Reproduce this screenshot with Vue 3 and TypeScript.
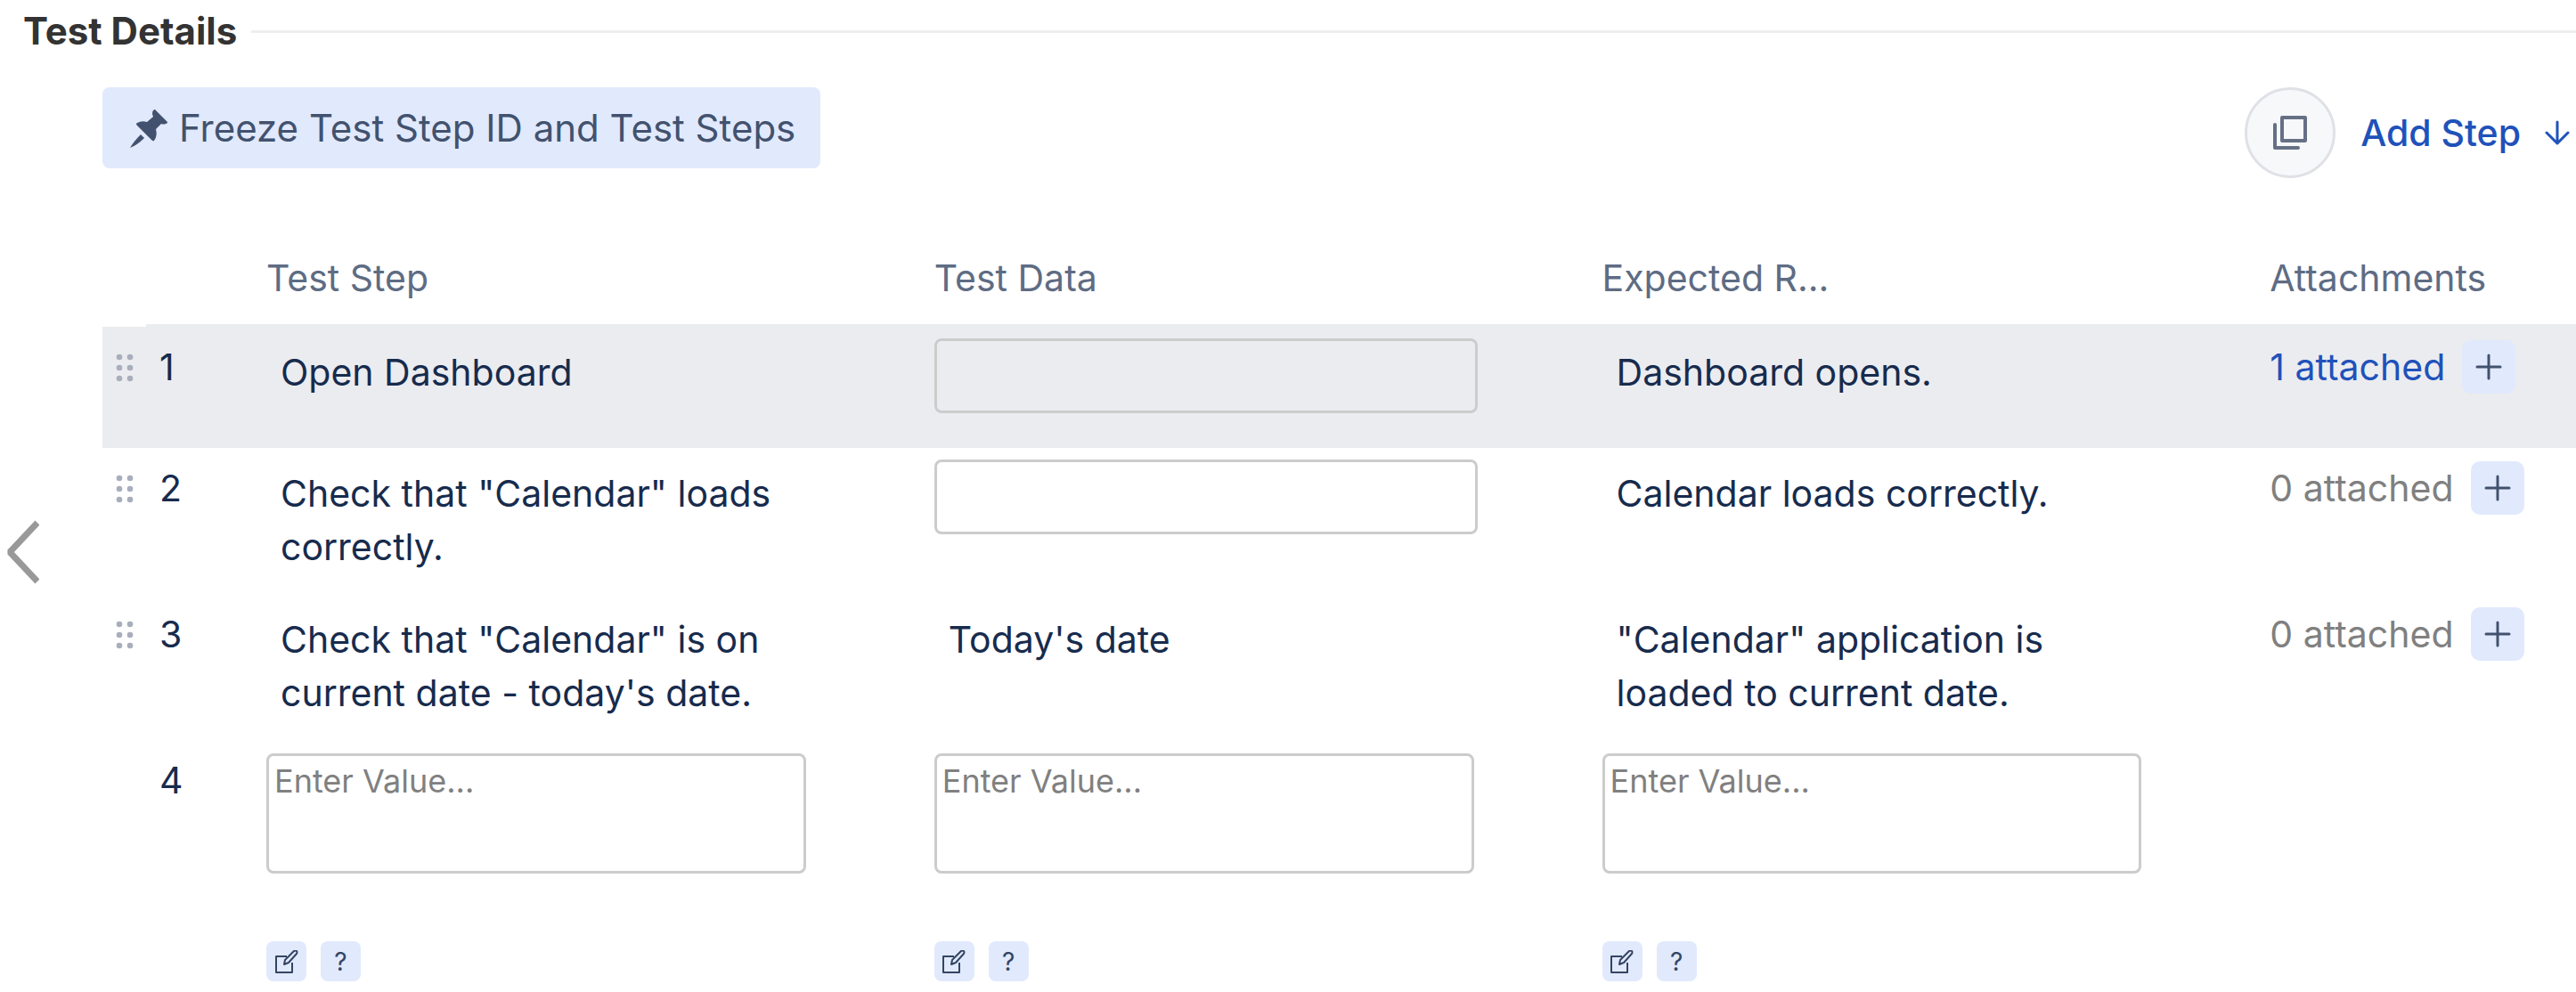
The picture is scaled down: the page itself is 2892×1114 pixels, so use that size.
<script setup lang="ts">
import { ref } from 'vue'

interface Step {
  id: number
  step: string
  data: string
  expected: string
  attached: number
}

const steps = ref<Step[]>([
  { id: 1, step: 'Open Dashboard', data: '', expected: 'Dashboard opens.', attached: 1 },
  { id: 2, step: 'Check that "Calendar" loads correctly.', data: '', expected: 'Calendar loads correctly.', attached: 0 },
  {
    id: 3,
    step: 'Check that "Calendar" is on current date - today\'s date.',
    data: "Today's date",
    expected: '"Calendar" application is loaded to current date.',
    attached: 0,
  },
])

const draftFields = ['Test Step', 'Test Data', 'Expected Result']
const drafts = ref<string[]>(['', '', ''])
const activeId = ref(1)
</script>

<template>
  <section class="details">
    <header class="title-bar">
      <h2>Test Details</h2>
    </header>

    <div class="body">
      <aside class="gutter">
        <button type="button" class="prev" aria-label="Previous">
          <svg width="44" height="72" viewBox="0 0 44 72" fill="none" stroke="#999" stroke-width="7" stroke-linejoin="bevel">
            <path d="M42 3 11 36l31 33" />
          </svg>
        </button>
      </aside>

      <div class="content">
        <div class="toolbar">
          <button type="button" class="freeze">
            <svg width="44" height="44" viewBox="0 0 44 44" fill="#42526e">
              <path d="M27 2q2-2 3 0l13 13q0 2-2 2-3 1-5 0l-6 6q2 8-2 13-1 1-3-1L9 19q-2-2 0-3 5-3 11-1l7-6q-2-4 0-7z" />
              <path d="M13 29l4 4Q9 41 1 44 5 37 13 29z" />
            </svg>
            <span>Freeze Test Step ID and Test Steps</span>
          </button>
          <div class="actions">
            <button type="button" class="copy" aria-label="Copy steps">
              <svg width="38" height="38" viewBox="0 0 38 38" fill="none" stroke="#667085" stroke-width="4">
                <path d="M10 2h26v26H10z" stroke-linejoin="round" />
                <path d="M2 10v26h26" stroke-linecap="round" stroke-linejoin="round" />
              </svg>
            </button>
            <a href="#" class="add-step">
              Add Step
              <svg width="28" height="28" viewBox="0 0 28 28" fill="none" stroke="currentColor" stroke-width="3" stroke-linecap="round" stroke-linejoin="round">
                <path d="M14 2v24M2 14l12 12 12-12" />
              </svg>
            </a>
          </div>
        </div>

        <table>
          <colgroup>
            <col class="c-grip" />
            <col class="c-num" />
            <col class="c-text" />
            <col class="c-text" />
            <col class="c-text" />
            <col />
          </colgroup>
          <thead>
            <tr>
              <td></td>
              <td></td>
              <th scope="col">Test Step</th>
              <th scope="col">Test Data</th>
              <th scope="col">Expected R...</th>
              <th scope="col">Attachments</th>
            </tr>
          </thead>
          <tbody>
            <tr v-for="s in steps" :key="s.id" :class="{ active: s.id === activeId }">
              <td class="grip">
                <svg width="20" height="32" viewBox="0 0 20 32" fill="#a9aebc">
                  <template v-for="y in [4, 16, 28]" :key="y">
                    <circle cx="4" :cy="y" r="3.3" />
                    <circle cx="16" :cy="y" r="3.3" />
                  </template>
                </svg>
              </td>
              <td class="num">{{ s.id }}</td>
              <td class="cell"><div class="value">{{ s.step }}</div></td>
              <td class="cell">
                <div v-if="s.data" class="value">{{ s.data }}</div>
                <input v-else v-model="s.data" class="value empty" type="text" :aria-label="`Test Data ${s.id}`" />
              </td>
              <td class="cell"><div class="value">{{ s.expected }}</div></td>
              <td class="files">
                <div class="files-row">
                  <a v-if="s.attached" href="#">{{ s.attached }} attached</a>
                  <span v-else>{{ s.attached }} attached</span>
                  <button type="button" class="plus" aria-label="Add attachment">
                    <svg width="30" height="30" viewBox="0 0 30 30" fill="none" stroke="#42526e" stroke-width="3" stroke-linecap="round">
                      <path d="M15 2v26M2 15h26" />
                    </svg>
                  </button>
                </div>
              </td>
            </tr>
            <tr>
              <td></td>
              <td class="num">{{ steps.length + 1 }}</td>
              <td v-for="(name, i) in draftFields" :key="name" class="draft">
                <textarea v-model="drafts[i]" placeholder="Enter Value..." :aria-label="name"></textarea>
                <div class="tools">
                  <button type="button" aria-label="Edit">
                    <svg width="26" height="26" viewBox="0 0 26 26" fill="none" stroke="#344563" stroke-width="2" stroke-linejoin="round">
                      <path d="M13 7H1v18h18V14" />
                      <path d="M10 16l1-5L21 1q2-1 3 0t0 3L15 14z" fill="#e1e9fd" />
                    </svg>
                  </button>
                  <button type="button" aria-label="Help">?</button>
                </div>
              </td>
              <td></td>
            </tr>
          </tbody>
        </table>
      </div>
    </div>
  </section>
</template>

<style>
body {
  margin: 0;
  background: #fff;
}
</style>

<style scoped>
.details {
  font-family: Inter, 'Liberation Sans', sans-serif;
  font-size: 41px;
  line-height: 60px;
  color: #172b4d;
  overflow: hidden;
}

* {
  box-sizing: border-box;
}

button {
  border: 0;
  padding: 0;
  background: #e1e9fd;
  color: #344563;
  font-family: inherit;
  cursor: pointer;
}

svg {
  display: block;
  flex: none;
}

a {
  color: #1f52ba;
  text-decoration: none;
}

.title-bar {
  display: flex;
  align-items: center;
  gap: 16px;
  padding: 5px 0 0 26px;
}

.title-bar::after {
  content: '';
  flex: 1;
  height: 3px;
  background: #eee;
}

h2 {
  margin: 0;
  font-size: 42px;
  font-weight: 700;
  color: #333;
}

.body {
  display: flex;
  padding-top: 33px;
}

.gutter {
  flex: 0 0 115px;
  padding-top: 486px;
}

.prev {
  background: none;
}

.content {
  flex: 1;
  min-width: 0;
}

.toolbar {
  display: flex;
  justify-content: space-between;
  align-items: flex-start;
  padding-right: 7px;
}

.freeze {
  display: flex;
  align-items: center;
  gap: 12px;
  height: 91px;
  padding: 0 28px 0 30px;
  border-radius: 8px;
  font-size: 42px;
  color: #42526e;
}

.actions {
  display: flex;
  align-items: center;
  gap: 28px;
}

.copy {
  display: flex;
  align-items: center;
  justify-content: center;
  width: 102px;
  height: 102px;
  border: 3px solid #dfe1e6;
  border-radius: 50%;
  background: #f7f8fa;
}

.add-step {
  display: flex;
  align-items: center;
  gap: 27px;
  font-weight: 500;
}

table {
  width: 100%;
  margin-top: 60px;
  table-layout: fixed;
  border-collapse: separate;
  border-spacing: 0;
}

.c-grip {
  width: 49px;
}

.c-num {
  width: 135px;
}

.c-text {
  width: 27%;
}

th,
td {
  padding: 0;
  text-align: left;
  vertical-align: top;
}

thead th,
thead td + td {
  border-bottom: 3px solid #ebecf0;
}

th {
  padding: 22px 0;
  font-weight: 400;
  color: #5e6c84;
}

.active td {
  background: #ebecf0;
}

.grip {
  height: 136px;
  padding: 30px 0 0 15px;
}

.num {
  padding: 15px 0 0 15px;
}

.cell {
  padding: 13px 140px 15px 0;
}

.value {
  width: 100%;
  min-height: 84px;
  padding: 5px 13px;
  border: 3px solid transparent;
  border-radius: 8px;
}

.empty {
  display: block;
  height: 84px;
  border-color: #ccc;
  background: transparent;
  font: inherit;
}

.files {
  padding-top: 15px;
  color: #808080;
}

.files-row {
  display: flex;
  align-items: center;
  gap: 19px;
}

.plus {
  display: flex;
  align-items: center;
  justify-content: center;
  width: 60px;
  height: 60px;
  border-radius: 10px;
}

.draft {
  padding: 15px 144px 0 0;
}

textarea {
  display: block;
  width: 100%;
  height: 135px;
  padding: 4px 6px;
  border: 3px solid #ccc;
  border-radius: 8px;
  background: #fff;
  font-family: inherit;
  font-size: 36px;
  line-height: 48px;
  color: #172b4d;
  resize: none;
}

textarea::placeholder {
  color: #808080;
  opacity: 1;
}

.tools {
  display: flex;
  gap: 16px;
  margin-top: 76px;
}

.tools button {
  display: flex;
  align-items: center;
  justify-content: center;
  width: 45px;
  height: 45px;
  border-radius: 8px;
  font-size: 28px;
}
</style>
